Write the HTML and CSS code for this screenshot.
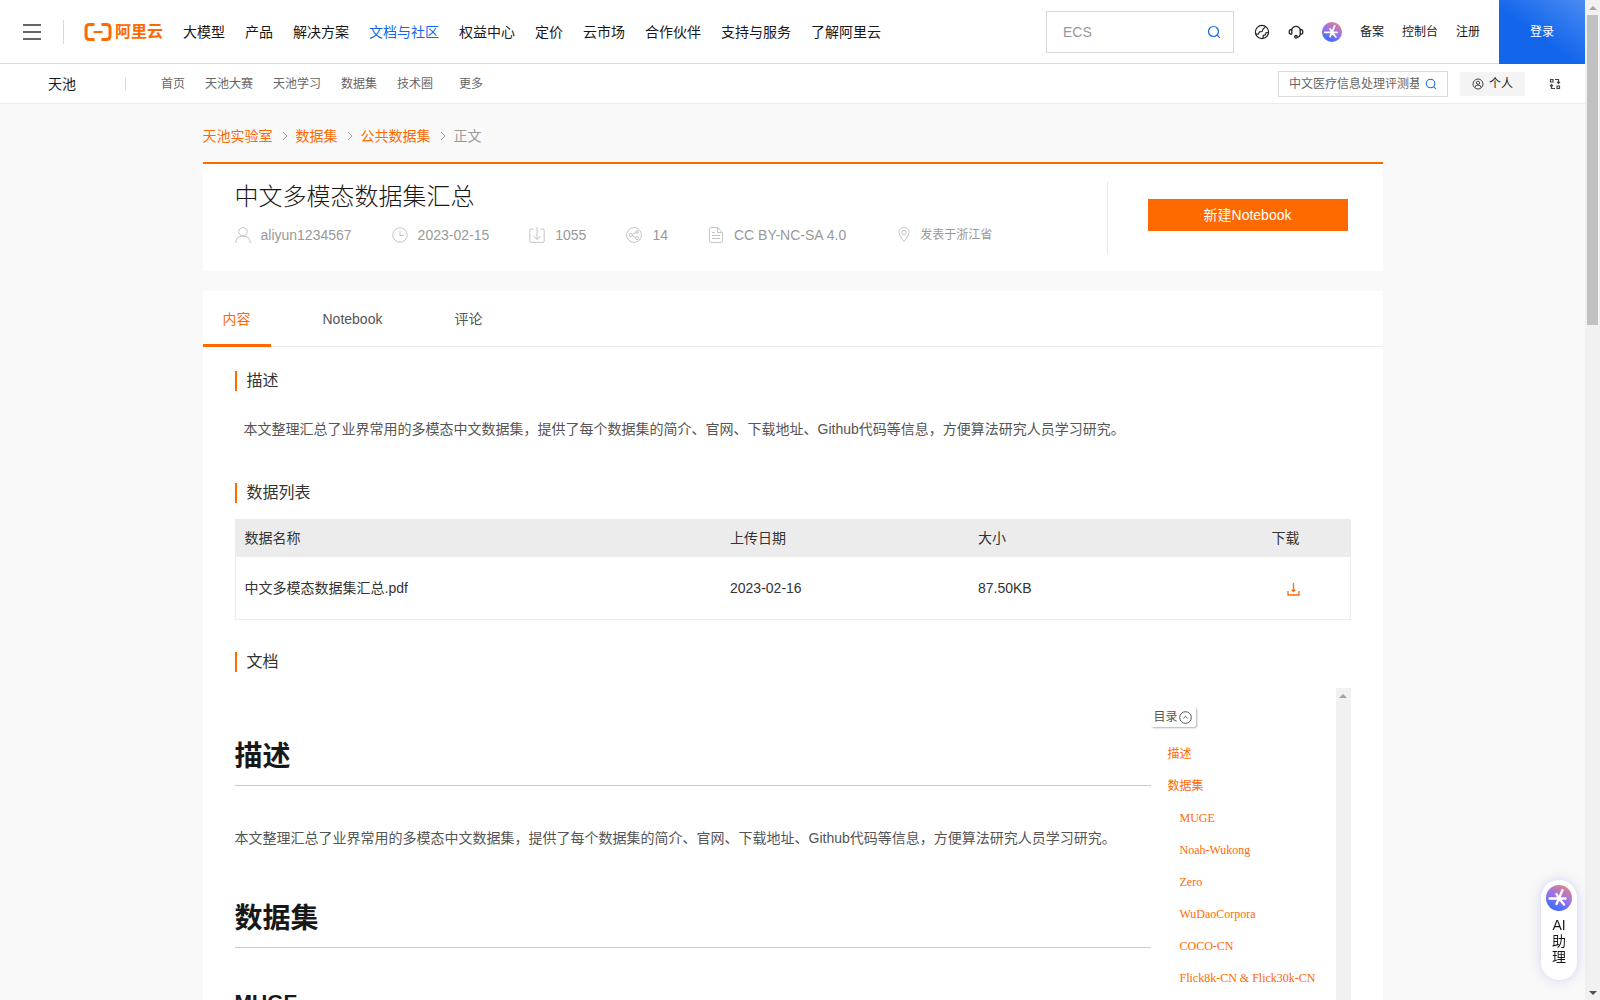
FILE: index.html
```html
<!DOCTYPE html>
<html lang="zh-CN">
<head>
    <meta charset="UTF-8">
    <meta name="viewport" content="width=device-width, initial-scale=1.0">
    <title>中文多模态数据集汇总_数据集-阿里云天池</title>
    <link rel="stylesheet" href="styles.css">
</head>
<body>

    <!-- Shared gradient for the AI icon -->
    <svg class="defs" width="0" height="0" aria-hidden="true">
        <defs>
            <linearGradient id="aiGradient" x1="0.8" y1="0" x2="0.3" y2="1">
                <stop offset="0" stop-color="#e8837e"/>
                <stop offset="0.5" stop-color="#9a72ea"/>
                <stop offset="1" stop-color="#2f6bff"/>
            </linearGradient>
            <symbol id="aiIcon" viewBox="0 0 26 26">
                <circle cx="13" cy="13" r="13" fill="url(#aiGradient)"/>
                <path d="M3.500 13.500h16M16.500 5l-3.500 8.500M13 13.500l5 6M13 13.500l-2.500 5.500M13 13.500l-2.500-4.500" fill="none" stroke="#fff" stroke-width="2.400" stroke-linecap="round"/>
            </symbol>
            <symbol id="searchIcon" viewBox="0 0 14 14">
                <circle cx="6.500" cy="6.500" r="5" fill="none" stroke="#1366ec" stroke-width="1.200"/>
                <path d="M10.200 10.200l2.600 2.600" stroke="#1366ec" stroke-width="1.200"/>
            </symbol>
        </defs>
    </svg>

    <div class="window">
        <div class="page">

            <!-- Top header -->
            <header class="header">
                <button type="button" class="menu-button" aria-label="菜单">
                    <span></span><span></span><span></span>
                </button>
                <a href="#" class="logo">
                    <svg width="28" height="18" viewBox="0 0 28 18" fill="none" stroke="#ff6a00" aria-hidden="true">
                        <path d="M10.500 1.500H5.500Q2 1.500 2 5v8q0 3.500 3.500 3.500h5" stroke-width="3"/>
                        <path d="M17.500 1.500h5Q26 1.500 26 5v8q0 3.500-3.500 3.500h-5" stroke-width="3"/>
                        <path d="M9.500 9h9" stroke-width="2"/>
                    </svg>
                    <span>阿里云</span>
                </a>
                <nav class="nav">
                    <a href="#">大模型</a>
                    <a href="#">产品</a>
                    <a href="#">解决方案</a>
                    <a href="#" class="active">文档与社区</a>
                    <a href="#">权益中心</a>
                    <a href="#">定价</a>
                    <a href="#">云市场</a>
                    <a href="#">合作伙伴</a>
                    <a href="#">支持与服务</a>
                    <a href="#">了解阿里云</a>
                </nav>
                <form class="search">
                    <input type="text" placeholder="ECS" aria-label="搜索">
                    <button type="submit" aria-label="搜索"><svg width="14" height="14" aria-hidden="true"><use href="#searchIcon"/></svg></button>
                </form>
                <div class="tools">
                    <a href="#" aria-label="语言">
                        <svg width="16" height="16" viewBox="0 0 16 16" fill="none" stroke="#222" stroke-width="1.200" aria-hidden="true">
                            <circle cx="8" cy="8" r="6.600"/>
                            <path d="M1.800 10.200l2.700-.2 1-2.200 2.500-.3 1.200-2.700 2-1.500M9 14.300l.3-2.800 2-.8.700-2 2.400-.2"/>
                        </svg>
                    </a>
                    <a href="#" aria-label="客服">
                        <svg width="16" height="16" viewBox="0 0 16 16" fill="none" stroke="#222" stroke-width="1.300" aria-hidden="true">
                            <path d="M3.800 10.300V6.500a4.200 4.200 0 0 1 8.400 0v3.800q-.2 2.700-2.800 3M3.800 5.500Q1.200 5.300 1.200 7.900t2.600 2.400M12.200 5.500q2.600-.2 2.600 2.400t-2.600 2.400"/>
                            <circle cx="8" cy="12.800" r="1.300"/>
                        </svg>
                    </a>
                    <a href="#" aria-label="AI 助理"><svg width="20" height="20" aria-hidden="true"><use href="#aiIcon"/></svg></a>
                </div>
                <div class="account">
                    <a href="#">备案</a>
                    <a href="#">控制台</a>
                    <a href="#">注册</a>
                </div>
                <a href="#" class="login">登录</a>
            </header>

            <!-- Tianchi sub header -->
            <div class="subheader">
                <a href="#" class="brand">天池</a>
                <nav class="subnav">
                    <a href="#">首页</a>
                    <a href="#">天池大赛</a>
                    <a href="#">天池学习</a>
                    <a href="#">数据集</a>
                    <a href="#">技术圈</a>
                    <a href="#" class="more">更多</a>
                </nav>
                <form class="search small">
                    <input type="text" placeholder="中文医疗信息处理评测基准" aria-label="搜索天池">
                    <button type="submit" aria-label="搜索天池"><svg width="12" height="12" aria-hidden="true"><use href="#searchIcon"/></svg></button>
                </form>
                <button type="button" class="personal">
                    <svg width="12" height="12" viewBox="0 0 12 12" fill="none" stroke="#444" aria-hidden="true">
                        <circle cx="6" cy="6" r="5"/>
                        <circle cx="6" cy="4.800" r="1.600"/>
                        <path d="M3 9.500q0-2.500 3-2.500t3 2.500"/>
                    </svg>
                    个人
                </button>
                <button type="button" class="switch" aria-label="切换">
                    <svg width="12" height="12" viewBox="0 0 12 12" fill="none" stroke="#444" stroke-width="1.200" aria-hidden="true">
                        <path d="M1.500 1.500h2.500v2.500H1.500zM6 1.500h3.500v3.500M8 3.800l1.500 1.500L11 3.800M8 8h2.500v2.500H8zM6 10.500H2.500V7M1 8.200l1.500-1.500L4 8.200"/>
                    </svg>
                </button>
            </div>

            <main class="container">
                <!-- Breadcrumb -->
                <nav class="breadcrumb">
                    <a href="#">天池实验室</a>
                    <svg width="6" height="10" viewBox="0 0 6 10" aria-hidden="true"><path d="M1 1l4 4-4 4" fill="none" stroke="#999"/></svg>
                    <a href="#">数据集</a>
                    <svg width="6" height="10" viewBox="0 0 6 10" aria-hidden="true"><path d="M1 1l4 4-4 4" fill="none" stroke="#999"/></svg>
                    <a href="#">公共数据集</a>
                    <svg width="6" height="10" viewBox="0 0 6 10" aria-hidden="true"><path d="M1 1l4 4-4 4" fill="none" stroke="#999"/></svg>
                    <span>正文</span>
                </nav>

                <!-- Dataset summary -->
                <section class="summary">
                    <div class="summary-info">
                        <h1>中文多模态数据集汇总</h1>
                        <ul class="meta">
                            <li>
                                <svg width="16" height="16" viewBox="0 0 16 16" aria-hidden="true"><circle cx="8" cy="4.800" r="4.200"/><path d="M.6 16q.4-7 7.400-7t7.400 7"/></svg>
                                aliyun1234567
                            </li>
                            <li>
                                <svg width="16" height="16" viewBox="0 0 16 16" aria-hidden="true"><circle cx="8" cy="8" r="7.200"/><path d="M8 3.500v5h4"/></svg>
                                2023-02-15
                            </li>
                            <li>
                                <svg width="16" height="16" viewBox="0 0 16 16" aria-hidden="true"><path d="M4.500 2H2Q.8 2 .8 3.200v11q0 1.200 1.200 1.200h12q1.200 0 1.200-1.200v-11Q15.200 2 14 2h-2.500M8 0v12.500M4.500 9L8 12.500 11.500 9"/></svg>
                                1055
                            </li>
                            <li>
                                <svg width="16" height="16" viewBox="0 0 16 16" aria-hidden="true"><circle cx="8" cy="8" r="7.400"/><circle cx="4.800" cy="8" r="1.600"/><circle cx="11" cy="5" r="1.300"/><circle cx="11" cy="11.200" r="1.500"/><path d="M6.200 7.300l3.600-1.700M6.200 8.700l3.500 1.800"/></svg>
                                14
                            </li>
                            <li>
                                <svg width="16" height="16" viewBox="0 0 16 16" aria-hidden="true"><path d="M9.500.6H2.600q-1.200 0-1.200 1.200v12.400q0 1.200 1.200 1.200h10.800q1.200 0 1.200-1.200V5.500zM9.500.6v5h5M4 5.500h3M4 8.500h8M4 11.500h8"/></svg>
                                CC BY-NC-SA 4.0
                            </li>
                            <li class="place">
                                <svg width="12" height="16" viewBox="0 0 12 16" aria-hidden="true"><path d="M6 14.500Q1 8.500 1 5.500a5 5 0 0 1 10 0q0 3-5 9z"/><circle cx="6" cy="5.500" r="2.200"/></svg>
                                发表于浙江省
                            </li>
                        </ul>
                    </div>
                    <div class="summary-action">
                        <button type="button" class="primary-button">新建Notebook</button>
                    </div>
                </section>

                <section class="detail">
                    <!-- Tabs -->
                    <nav class="tabs">
                        <a href="#" class="active">内容</a>
                        <a href="#">Notebook</a>
                        <a href="#">评论</a>
                    </nav>

                    <div class="detail-body">
                        <h2 class="section-title">描述</h2>
                        <p class="description">本文整理汇总了业界常用的多模态中文数据集，提供了每个数据集的简介、官网、下载地址、Github代码等信息，方便算法研究人员学习研究。</p>

                        <h2 class="section-title">数据列表</h2>
                        <table class="files">
                            <thead>
                                <tr>
                                    <th class="col-name">数据名称</th>
                                    <th class="col-date">上传日期</th>
                                    <th>大小</th>
                                    <th class="col-download">下载</th>
                                </tr>
                            </thead>
                            <tbody>
                                <tr>
                                    <td>中文多模态数据集汇总.pdf</td>
                                    <td>2023-02-16</td>
                                    <td>87.50KB</td>
                                    <td class="col-download">
                                        <a href="#" aria-label="下载">
                                            <svg width="13" height="13" viewBox="0 0 13 13" fill="none" stroke="#ff6a00" stroke-width="1.300" aria-hidden="true"><path d="M1 8v4h11V8M6.500 0v8M4.800 6.800l1.700 1.700 1.700-1.700"/></svg>
                                        </a>
                                    </td>
                                </tr>
                            </tbody>
                        </table>

                        <h2 class="section-title">文档</h2>
                        <div class="doc">
                            <article class="markdown">
                                <h1>描述</h1>
                                <p>本文整理汇总了业界常用的多模态中文数据集，提供了每个数据集的简介、官网、下载地址、Github代码等信息，方便算法研究人员学习研究。</p>
                                <h1>数据集</h1>
                                <h2>MUGE</h2>
                            </article>
                            <aside class="toc">
                                <button type="button" class="toc-button">
                                    目录
                                    <svg width="13" height="13" viewBox="0 0 13 13" fill="none" stroke="#555" aria-hidden="true"><circle cx="6.500" cy="6.500" r="5.800"/><path d="M4.300 7.500l2.200-2.200 2.200 2.200"/></svg>
                                </button>
                                <ul>
                                    <li><a href="#">描述</a></li>
                                    <li><a href="#">数据集</a></li>
                                    <li class="sub"><a href="#">MUGE</a></li>
                                    <li class="sub"><a href="#">Noah-Wukong</a></li>
                                    <li class="sub"><a href="#">Zero</a></li>
                                    <li class="sub"><a href="#">WuDaoCorpora</a></li>
                                    <li class="sub"><a href="#">COCO-CN</a></li>
                                    <li class="sub"><a href="#">Flick8k-CN &amp; Flick30k-CN</a></li>
                                </ul>
                            </aside>
                            <div class="scrollbar"><i class="arrow-up"></i></div>
                        </div>
                    </div>
                </section>
            </main>
        </div>

        <!-- Page scrollbar -->
        <div class="scrollbar">
            <i class="arrow-up"></i>
            <i class="thumb"></i>
            <i class="arrow-down"></i>
        </div>
    </div>

    <!-- Floating AI assistant -->
    <button type="button" class="assistant">
        <svg width="26" height="26" aria-hidden="true"><use href="#aiIcon"/></svg>
        <span>AI<br>助<br>理</span>
    </button>

</body>
</html>
```
FILE: styles.css
```css
* {
    box-sizing: border-box;
}

/* Body styling */
body {
    margin: 0;
    font-family: "Liberation Sans", "Noto Sans CJK SC", sans-serif;
    font-size: 14px;
    line-height: 20px;
    color: #333;
    background-color: #f9f9f9;
}

a {
    color: inherit;
    text-decoration: none;
}

ul {
    list-style: none;
    margin: 0;
    padding: 0;
}

button,
input {
    font: inherit;
    color: inherit;
    border: none;
    padding: 0;
    background: none;
}

button {
    cursor: pointer;
}

svg {
    display: block;
    flex-shrink: 0;
}

.defs {
    position: absolute;
}

.window {
    display: flex;
    height: 100vh;
}

.page {
    flex: 1;
    min-width: 0;
    overflow: hidden;
}

/* Scrollbars */
.scrollbar {
    display: flex;
    flex-direction: column;
    align-items: center;
    flex-shrink: 0;
    width: 15px;
    background-color: #f1f1f1;
}

.arrow-up,
.arrow-down {
    margin: 6px 0 5px;
    border: 4px solid transparent;
    border-top-width: 0;
    border-bottom-color: #a3a3a3;
}

.arrow-down {
    margin-top: auto;
    border-top: 4px solid #505050;
    border-bottom-width: 0;
}

.thumb {
    width: 11px;
    height: 31%;
    background-color: #c1c1c1;
}

/* Top header */
.header {
    display: flex;
    align-items: center;
    height: 64px;
    border-bottom: 1px solid #d9d9d9;
    background-color: #fff;
    color: #181818;
    white-space: nowrap;
}

.menu-button {
    display: flex;
    flex-direction: column;
    gap: 5px;
    margin-left: 23px;
}

.menu-button span {
    width: 18px;
    height: 2px;
    background-color: #666;
}

.logo {
    display: flex;
    align-items: center;
    gap: 3px;
    height: 24px;
    margin-left: 22px;
    padding-left: 20px;
    border-left: 1px solid #d9d9d9;
    font-size: 16px;
    font-weight: bold;
    color: #ff6a00;
}

.nav {
    display: flex;
    gap: 20px;
    margin-left: 20px;
}

.nav .active {
    color: #1366ec;
}

.search {
    display: flex;
    align-items: center;
    width: 188px;
    height: 42px;
    margin-left: auto;
    padding: 0 12px 0 16px;
    border: 1px solid #d9d9d9;
    background-color: #fff;
}

.search input {
    flex: 1;
    min-width: 0;
    outline: none;
}

.search input::placeholder {
    color: #999;
    opacity: 1;
}

.tools {
    display: flex;
    align-items: center;
    gap: 18px;
    margin-left: 20px;
}

.account {
    display: flex;
    gap: 18px;
    margin: 0 19px 0 18px;
    font-size: 12px;
}

.login {
    width: 86px;
    height: 64px;
    margin-bottom: -1px;
    line-height: 64px;
    text-align: center;
    font-size: 12px;
    color: #fff;
    background: linear-gradient(35deg, #1366ec 45%, #4a8bf2);
}

/* Tianchi sub header */
.subheader {
    display: flex;
    align-items: center;
    height: 40px;
    border-bottom: 1px solid #ebebeb;
    background-color: #fff;
    font-size: 12px;
    color: #666;
    white-space: nowrap;
}

.brand {
    width: 77px;
    margin-left: 48px;
    font-size: 14px;
    color: #181818;
}

.subnav {
    display: flex;
    gap: 20px;
    height: 12px;
    padding-left: 35px;
    border-left: 1px solid #d9d9d9;
    line-height: 12px;
}

.subnav .more {
    padding-left: 6px;
}

.search.small {
    width: 170px;
    height: 26px;
    padding: 0 10px;
    gap: 6px;
}

.search.small input::placeholder {
    color: #666;
}

.personal {
    display: flex;
    align-items: center;
    justify-content: center;
    gap: 5px;
    width: 65px;
    height: 24px;
    margin-left: 12px;
    background-color: #f4f4f4;
    color: #181818;
}

.switch {
    margin: 0 24px;
}

.container {
    max-width: 1180px;
    margin: 0 auto;
}

/* Breadcrumb */
.breadcrumb {
    display: flex;
    align-items: center;
    gap: 8px;
    padding: 22px 0 16px;
    color: #999;
}

.breadcrumb a {
    color: #ff6a00;
}

.breadcrumb svg {
    margin-left: 1px;
}

/* Dataset summary */
.summary {
    display: flex;
    align-items: center;
    height: 109px;
    border-top: 2px solid #ff6a00;
    background-color: #fff;
}

.summary-info {
    flex: 1;
    padding-left: 32px;
}

.summary h1 {
    margin: 0 0 12px;
    font-size: 24px;
    font-weight: 300;
    line-height: 32px;
    color: #181818;
}

.meta {
    display: flex;
    align-items: center;
    gap: 40px;
    padding-bottom: 10px;
    color: #999;
}

.meta li {
    display: flex;
    align-items: center;
    gap: 10px;
}

.meta svg {
    fill: none;
    stroke: #c4c4c4;
}

.meta .place {
    padding-left: 12px;
    font-size: 12px;
}

.summary-action {
    padding: 17px 35px 23px 40px;
    border-left: 1px solid #e5e5e5;
}

.primary-button {
    width: 200px;
    height: 32px;
    background-color: #ff6a00;
    color: #fff;
}

/* Detail panel */
.detail {
    margin-top: 20px;
    background-color: #fff;
}

.tabs {
    display: flex;
    gap: 32px;
    border-bottom: 1px solid #ebebeb;
    color: #555;
}

.tabs a {
    height: 56px;
    margin-bottom: -1px;
    padding: 0 20px;
    border-bottom: 3px solid transparent;
    line-height: 56px;
}

.tabs .active {
    border-bottom-color: #ff6a00;
    color: #ff6a00;
}

.detail-body {
    padding: 24px 32px;
}

.section-title {
    margin: 0 0 16px;
    padding-left: 10px;
    border-left: 2px solid #ff6a00;
    font-size: 16px;
    font-weight: normal;
    line-height: 20px;
}

.description {
    margin: 0;
    padding: 12px 9px 44px;
    color: #555;
}

/* File list */
.files {
    width: 100%;
    margin-bottom: 32px;
    border: 1px solid #ebebeb;
    border-collapse: collapse;
    table-layout: fixed;
    text-align: left;
}

.files th {
    height: 37px;
    padding: 0 9px;
    background-color: #ececec;
    font-weight: normal;
}

.files td {
    height: 63px;
    padding: 0 9px;
}

.files .col-name {
    width: 486px;
}

.files .col-date {
    width: 248px;
}

.files .col-download {
    padding-right: 50px;
    text-align: right;
}

.files .col-download a {
    display: inline-block;
    vertical-align: middle;
}

/* Document */
.doc {
    display: flex;
    height: 800px;
}

.markdown {
    flex: 1;
    padding-top: 48px;
}

.markdown h1 {
    margin: 0 0 42px;
    padding-bottom: 7px;
    border-bottom: 1px solid #ccc;
    font-size: 28px;
    font-weight: bold;
    line-height: 42px;
    color: #181818;
}

.markdown p {
    margin: 0 0 50px;
    color: #555;
}

.markdown h2 {
    margin: 0;
    font-size: 21px;
    line-height: 24px;
    color: #181818;
}

/* Table of contents */
.toc {
    width: 185px;
    padding-top: 19px;
    font-family: "Liberation Serif", "Noto Sans CJK SC", serif;
    font-size: 12px;
    color: #ff6a00;
}

.toc-button {
    display: flex;
    align-items: center;
    gap: 1px;
    margin-bottom: 11px;
    padding: 0 4px 0 3px;
    border-radius: 2px;
    box-shadow: 1px 1px 2px rgba(0, 0, 0, 0.3);
    line-height: 20px;
    color: #555;
}

.toc li {
    padding-left: 17px;
    line-height: 32px;
}

.toc .sub {
    padding-left: 29px;
}

/* Floating AI assistant */
.assistant {
    position: fixed;
    right: 23px;
    bottom: 20px;
    display: flex;
    flex-direction: column;
    align-items: center;
    gap: 6px;
    width: 36px;
    height: 100px;
    padding-top: 5px;
    border-radius: 18px;
    background-color: #fff;
    box-shadow: 0 0 12px rgba(90, 90, 230, 0.25);
    line-height: 16px;
    color: #181818;
}
```
